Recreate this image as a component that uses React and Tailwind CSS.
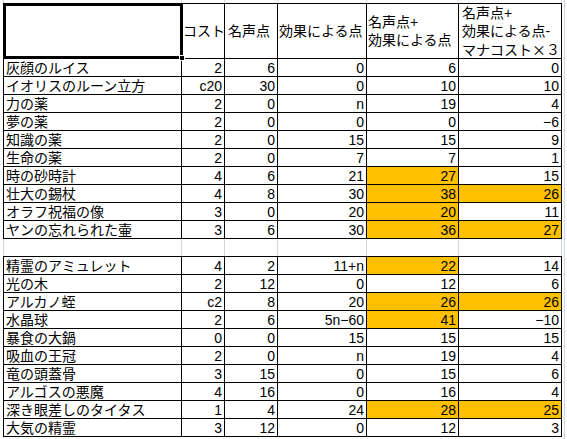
import React from "react";

const FONT = { fontFamily: '"Liberation Sans", "Noto Sans CJK JP", sans-serif' };
const CJK = { fontFamily: '"Noto Sans CJK JP", sans-serif' };

const t1 = [
  ["灰顔のルイス", "2", "6", "0", "6", "0", false, false],
  ["イオリスのルーン立方", "c20", "30", "0", "10", "10", false, false],
  ["力の薬", "2", "0", "n", "19", "4", false, false],
  ["夢の薬", "2", "0", "0", "0", "−6", false, false],
  ["知識の薬", "2", "0", "15", "15", "9", false, false],
  ["生命の薬", "2", "0", "7", "7", "1", false, false],
  ["時の砂時計", "4", "6", "21", "27", "15", true, false],
  ["壮大の錫杖", "4", "8", "30", "38", "26", true, true],
  ["オラフ祝福の像", "3", "0", "20", "20", "11", true, false],
  ["ヤンの忘れられた壷", "3", "6", "30", "36", "27", true, true],
];

const t2 = [
  ["精霊のアミュレット", "4", "2", "11+n", "22", "14", true, false],
  ["光の木", "2", "12", "0", "12", "6", false, false],
  ["アルカノ蛭", "c2", "8", "20", "26", "26", true, true],
  ["水晶球", "2", "6", "5n−60", "41", "−10", true, false],
  ["暴食の大鍋", "0", "0", "15", "15", "15", false, false],
  ["吸血の王冠", "2", "0", "n", "19", "4", false, false],
  ["竜の頭蓋骨", "3", "15", "0", "15", "6", false, false],
  ["アルゴスの悪魔", "4", "16", "0", "16", "4", false, false],
  ["深き眼差しのタイタス", "1", "4", "24", "28", "25", true, true],
  ["大気の精霊", "3", "12", "0", "12", "3", false, false],
];

function Cell({ children, right, hl }) {
  return (
    <div
      className={
        "h-[17px] leading-[16px] text-[14px] px-[2px] whitespace-nowrap pt-[1px] " +
        (right ? "text-right " : "text-left ") +
        (hl ? "bg-[#ffc000]" : "bg-white")
      }
    >
      {children}
    </div>
  );
}

function Rows({ rows }) {
  return rows.map((r, i) => (
    <React.Fragment key={i}>
      <Cell>{r[0]}</Cell>
      <Cell right>{r[1]}</Cell>
      <Cell right>{r[2]}</Cell>
      <Cell right>{r[3]}</Cell>
      <Cell right hl={r[6]}>{r[4]}</Cell>
      <Cell right hl={r[7]}>{r[5]}</Cell>
    </React.Fragment>
  ));
}

function Spacer({ h }) {
  return (
    <div className="grid grid-cols-[177px_42px_52px_88px_91px_102px] gap-x-[1px] bg-[#d0d7e5] px-[1px] w-[559px]">
      {[0, 1, 2, 3, 4, 5].map((i) => (
        <div key={i} className={"bg-white " + (h === 3 ? "h-[3px]" : "h-[17px]")} />
      ))}
    </div>
  );
}

export default function App() {
  return (
    <div className="relative w-[567px] h-[439px] bg-white text-black overflow-hidden" style={FONT}>
      <div className="flex flex-row">
        <div className="w-[3px]" />
        <div className="flex flex-col">
          <Spacer h={3} />
          <div className="grid grid-cols-[177px_42px_52px_88px_91px_102px] gap-[1px] bg-black p-[1px] w-[559px]">
            <div className="h-[54px] bg-white" />
            <div className="h-[54px] bg-white flex items-center px-[1px] text-[14px] leading-[18px] whitespace-nowrap">コスト</div>
            <div className="h-[54px] bg-white flex items-center px-[3px] text-[14px] leading-[18px] whitespace-nowrap">名声点</div>
            <div className="h-[54px] bg-white flex items-center px-[1px] text-[14px] leading-[18px] whitespace-nowrap">効果による点</div>
            <div className="h-[54px] bg-white flex items-center px-[1px] text-[14px] leading-[18px] whitespace-nowrap">
              <div>
                <div>名声点+</div>
                <div>効果による点</div>
              </div>
            </div>
            <div className="h-[54px] bg-white flex items-center px-[3px] text-[14px] leading-[18px] whitespace-nowrap">
              <div>
                <div>名声点+</div>
                <div>効果による点-</div>
                <div>
                  マナコスト<span style={CJK}>×</span>３
                </div>
              </div>
            </div>
            <Rows rows={t1} />
          </div>
          <Spacer h={17} />
          <div className="grid grid-cols-[177px_42px_52px_88px_91px_102px] gap-[1px] bg-black p-[1px] w-[559px]">
            <Rows rows={t2} />
          </div>
        </div>
        <div className="ml-[2px] w-[1px] h-[439px] bg-[#d0d7e5]" />
      </div>
      <div className="absolute left-[3px] top-[3px] w-[180px] h-[56px] border-[3px] border-black" />
      <div className="absolute left-[179px] top-[55px] w-[6px] h-[6px] bg-black border border-white" />
    </div>
  );
}
